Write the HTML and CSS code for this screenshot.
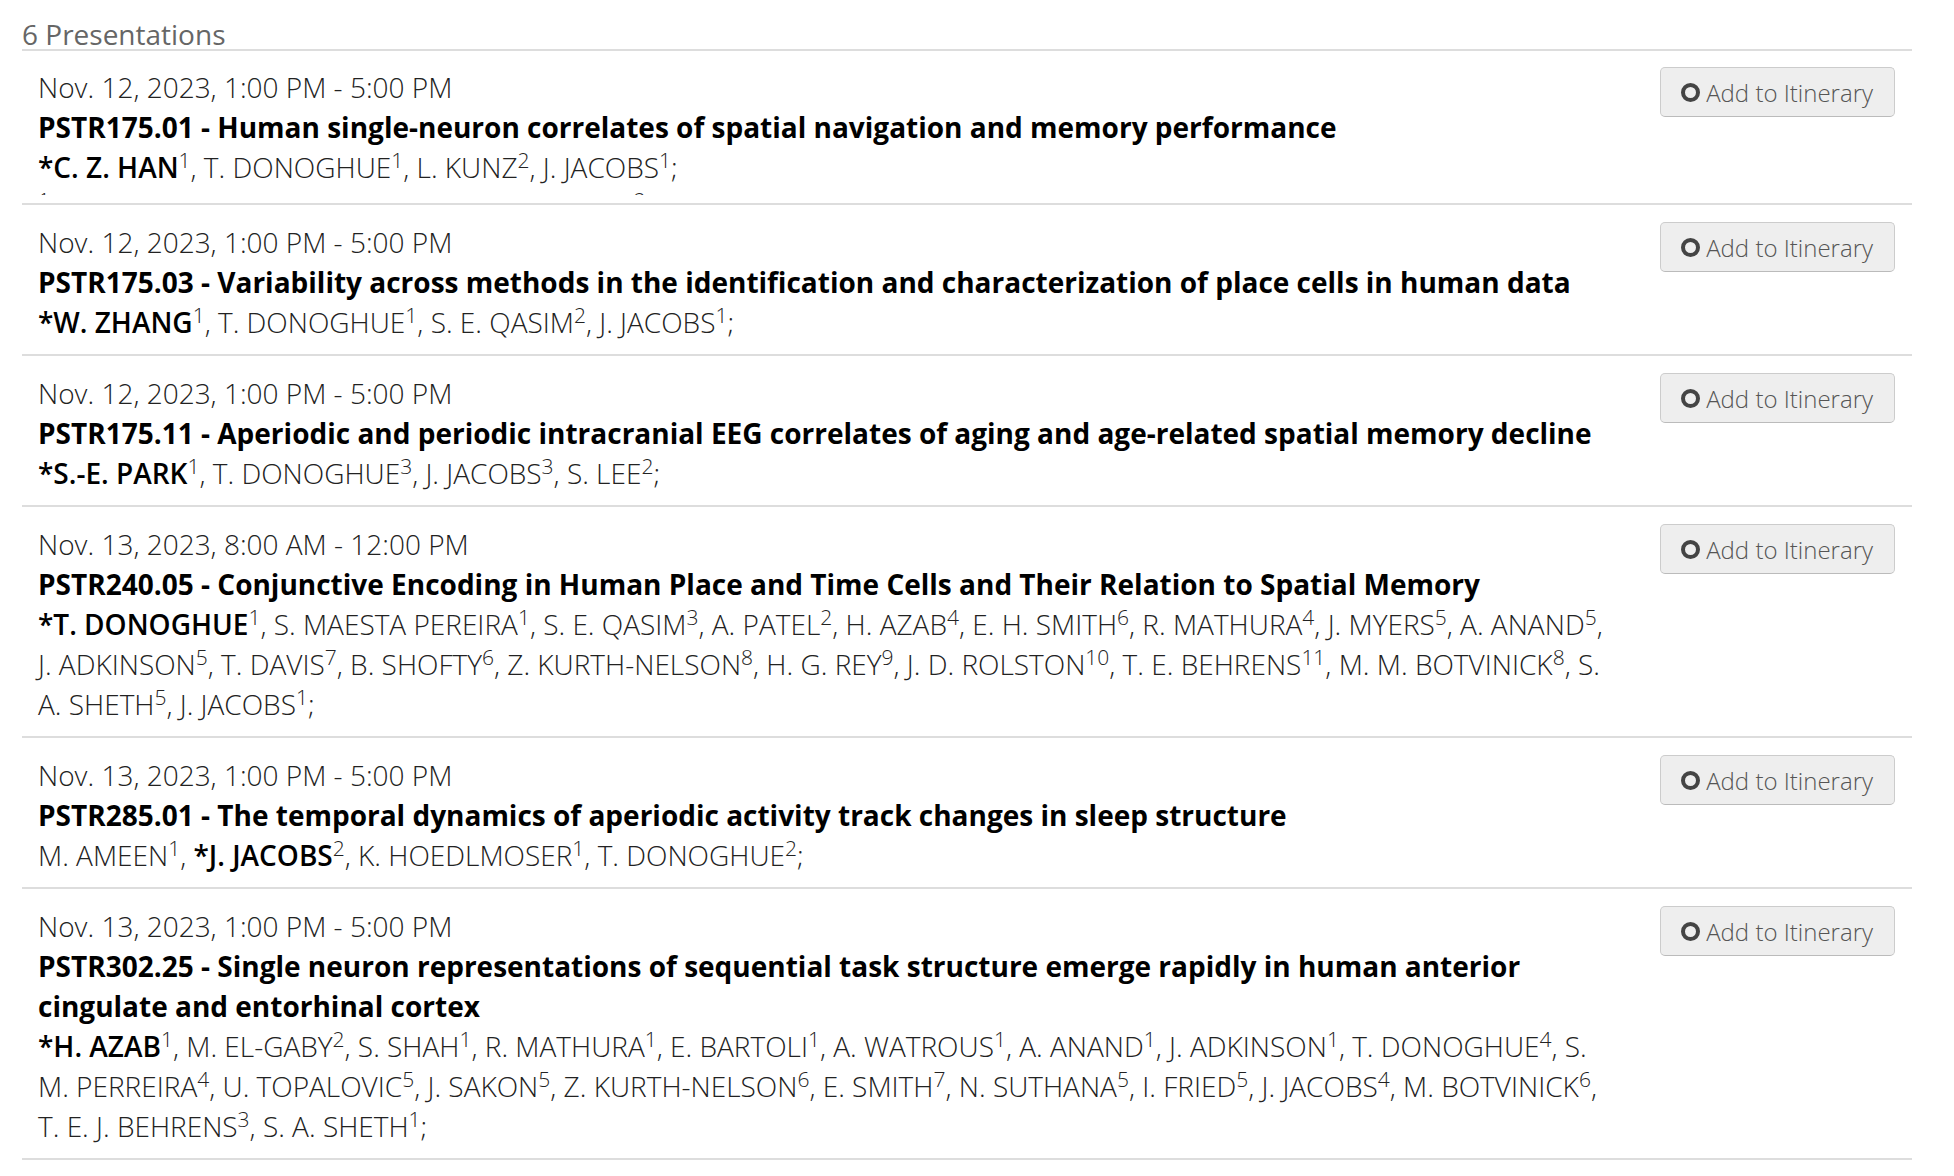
FILE: index.html
```html
<!DOCTYPE html>
<html lang="en">
<head>
    <meta charset="UTF-8">
    <title>Presentations</title>
    <link rel="stylesheet" href="styles.css">
</head>
<body>
    <div id="page">
        <h3 class="count">6 Presentations</h3>
        <ul class="list">
            <li class="item clamped">
                <div class="info">
                    <div class="when">Nov. 12, 2023, 1:00 PM - 5:00 PM</div>
                    <div class="title">PSTR175.01 - Human single-neuron correlates of spatial navigation and memory performance</div>
                    <div class="authors"><b>*C. Z. HAN</b><sup>1</sup>, T. DONOGHUE<sup>1</sup>, L. KUNZ<sup>2</sup>, J. JACOBS<sup>1</sup>;</div>
                    <div class="affil"><sup>1</sup>Biomed. Engin., Columbia Univ., New York, NY; <sup>2</sup>Univ. Hosp. Bonn, Bonn, Germany</div>
                </div>
                <button class="itin"><span class="ring"></span>Add to Itinerary</button>
            </li>
            <li class="item">
                <div class="info">
                    <div class="when">Nov. 12, 2023, 1:00 PM - 5:00 PM</div>
                    <div class="title">PSTR175.03 - Variability across methods in the identification and characterization of place cells in human data</div>
                    <div class="authors"><b>*W. ZHANG</b><sup>1</sup>, T. DONOGHUE<sup>1</sup>, S. E. QASIM<sup>2</sup>, J. JACOBS<sup>1</sup>;</div>
                </div>
                <button class="itin"><span class="ring"></span>Add to Itinerary</button>
            </li>
            <li class="item">
                <div class="info">
                    <div class="when">Nov. 12, 2023, 1:00 PM - 5:00 PM</div>
                    <div class="title">PSTR175.11 - Aperiodic and periodic intracranial EEG correlates of aging and age-related spatial memory decline</div>
                    <div class="authors"><b>*S.-E. PARK</b><sup>1</sup>, T. DONOGHUE<sup>3</sup>, J. JACOBS<sup>3</sup>, S. LEE<sup>2</sup>;</div>
                </div>
                <button class="itin"><span class="ring"></span>Add to Itinerary</button>
            </li>
            <li class="item">
                <div class="info">
                    <div class="when">Nov. 13, 2023, 8:00 AM - 12:00 PM</div>
                    <div class="title">PSTR240.05 - Conjunctive Encoding in Human Place and Time Cells and Their Relation to Spatial Memory</div>
                    <div class="authors"><b>*T. DONOGHUE</b><sup>1</sup>, S. MAESTA PEREIRA<sup>1</sup>, S. E. QASIM<sup>3</sup>, A. PATEL<sup>2</sup>, H. AZAB<sup>4</sup>, E. H. SMITH<sup>6</sup>, R. MATHURA<sup>4</sup>, J. MYERS<sup>5</sup>, A. ANAND<sup>5</sup>, J. ADKINSON<sup>5</sup>, T. DAVIS<sup>7</sup>, B. SHOFTY<sup>6</sup>, Z. KURTH-NELSON<sup>8</sup>, H. G. REY<sup>9</sup>, J. D. ROLSTON<sup>10</sup>, T. E. BEHRENS<sup>11</sup>, M. M. BOTVINICK<sup>8</sup>, S. A. SHETH<sup>5</sup>, J. JACOBS<sup>1</sup>;</div>
                </div>
                <button class="itin"><span class="ring"></span>Add to Itinerary</button>
            </li>
            <li class="item">
                <div class="info">
                    <div class="when">Nov. 13, 2023, 1:00 PM - 5:00 PM</div>
                    <div class="title">PSTR285.01 - The temporal dynamics of aperiodic activity track changes in sleep structure</div>
                    <div class="authors">M. AMEEN<sup>1</sup>, <b>*J. JACOBS</b><sup>2</sup>, K. HOEDLMOSER<sup>1</sup>, T. DONOGHUE<sup>2</sup>;</div>
                </div>
                <button class="itin"><span class="ring"></span>Add to Itinerary</button>
            </li>
            <li class="item">
                <div class="info">
                    <div class="when">Nov. 13, 2023, 1:00 PM - 5:00 PM</div>
                    <div class="title">PSTR302.25 - Single neuron representations of sequential task structure emerge rapidly in human anterior cingulate and entorhinal cortex</div>
                    <div class="authors"><b>*H. AZAB</b><sup>1</sup>, M. EL-GABY<sup>2</sup>, S. SHAH<sup>1</sup>, R. MATHURA<sup>1</sup>, E. BARTOLI<sup>1</sup>, A. WATROUS<sup>1</sup>, A. ANAND<sup>1</sup>, J. ADKINSON<sup>1</sup>, T. DONOGHUE<sup>4</sup>, S. M. PERREIRA<sup>4</sup>, U. TOPALOVIC<sup>5</sup>, J. SAKON<sup>5</sup>, Z. KURTH-NELSON<sup>6</sup>, E. SMITH<sup>7</sup>, N. SUTHANA<sup>5</sup>, I. FRIED<sup>5</sup>, J. JACOBS<sup>4</sup>, M. BOTVINICK<sup>6</sup>, T. E. J. BEHRENS<sup>3</sup>, S. A. SHETH<sup>1</sup>;</div>
                </div>
                <button class="itin"><span class="ring"></span>Add to Itinerary</button>
            </li>
        </ul>
    </div>
</body>
</html>
```

FILE: styles.css
```css
*{
    margin: 0;
    padding: 0;
    box-sizing: border-box;
}
body{
    background: #fff;
    font-family: "Open Sans", "Liberation Sans", sans-serif;
    color: #222;
}
li{
    list-style: none;
}
#page{
    padding: 0 42px 0 22px;
}
.count{
    padding-top: 19px;
    font-size: 28px;
    line-height: 30px;
    font-weight: 400;
    color: #666;
    border-bottom: 2px solid #ddd;
}
.item{
    display: flex;
    align-items: flex-start;
    padding: 16px 17px 12px 16px;
    border-bottom: 2px solid #ddd;
}
.item + .item{
    padding-top: 17px;
}
.info{
    width: 1578px;
    font-size: 28px;
    line-height: 40px;
    font-weight: 300;
}
/* the first one is cut short, only the tops of the affiliations show */
.clamped{
    padding-bottom: 8px;
}
.clamped .info{
    max-height: 128px;
    overflow: hidden;
}
.title{
    font-weight: 700;
    color: #000;
}
.authors b{
    font-weight: 600;
    color: #000;
}
sup{
    font-size: 75%;
    line-height: 0;
    vertical-align: super;
}
.itin{
    margin-left: auto;
    display: flex;
    align-items: center;
    height: 50px;
    padding: 0 21px 0 20px;
    background: #eee;
    border: 1px solid #ccc;
    border-bottom-color: #bbb;
    border-radius: 5px;
    font-family: "Open Sans", "Liberation Sans", sans-serif;
    font-size: 24px;
    font-weight: 300;
    color: #555;
    cursor: pointer;
}
.ring{
    width: 19px;
    height: 19px;
    margin-right: 6px;
    border: 4px solid #444;
    border-radius: 50%;
}
```
